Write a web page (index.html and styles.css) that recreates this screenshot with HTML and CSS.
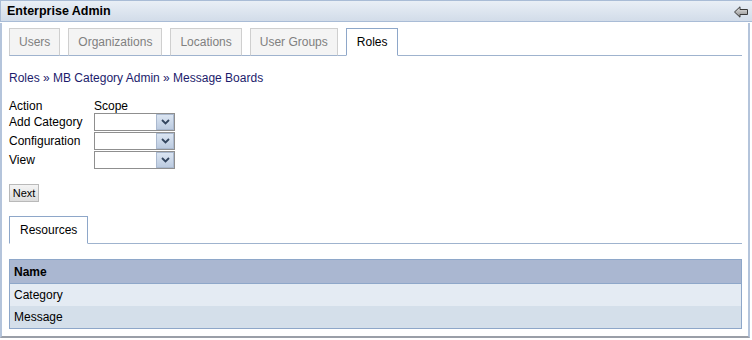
FILE: index.html
```
<!DOCTYPE html>
<html lang="en">
<head>
	<meta charset="UTF-8">
	<title>Enterprise Admin</title>
	<link rel="stylesheet" href="styles.css">
</head>
<body>
	<div class="portlet">
		<div class="portlet-title">
			<span class="title-text">Enterprise Admin</span>
			<a class="back-icon" href="#" title="Back">
				<svg width="14" height="12" viewBox="0 0 14 12">
					<defs>
						<linearGradient id="arrowFill" x1="0" y1="0" x2="0" y2="1">
							<stop offset="0" stop-color="#e8e8e8"/>
							<stop offset="1" stop-color="#8a8a8a"/>
						</linearGradient>
					</defs>
					<polygon points="0.5,6 6,0.8 6,3.5 13.5,3.5 13.5,8.5 6,8.5 6,11.2" fill="url(#arrowFill)" stroke="#3a3a3a" stroke-width="1"/>
				</svg>
			</a>
		</div>
		<div class="portlet-content">
			<ul class="tabs">
				<li class="tab"><a href="#">Users</a></li>
				<li class="tab"><a href="#">Organizations</a></li>
				<li class="tab"><a href="#">Locations</a></li>
				<li class="tab"><a href="#">User Groups</a></li>
				<li class="tab current"><a href="#">Roles</a></li>
			</ul>

			<div class="breadcrumbs">
				<a href="#">Roles</a> &raquo; <a href="#">MB Category Admin</a> &raquo; <a href="#">Message Boards</a>
			</div>

			<table class="perm-form">
				<tr>
					<td class="label">Action</td>
					<td>Scope</td>
				</tr>
				<tr>
					<td class="label">Add Category</td>
					<td><span class="combo"><select></select><span class="combo-btn"><svg width="9" height="6" viewBox="0 0 9 6"><polyline points="1,1 4.5,4.5 8,1" fill="none" stroke="#33455e" stroke-width="1.8"/></svg></span></span></td>
				</tr>
				<tr>
					<td class="label">Configuration</td>
					<td><span class="combo"><select></select><span class="combo-btn"><svg width="9" height="6" viewBox="0 0 9 6"><polyline points="1,1 4.5,4.5 8,1" fill="none" stroke="#33455e" stroke-width="1.8"/></svg></span></span></td>
				</tr>
				<tr>
					<td class="label">View</td>
					<td><span class="combo"><select></select><span class="combo-btn"><svg width="9" height="6" viewBox="0 0 9 6"><polyline points="1,1 4.5,4.5 8,1" fill="none" stroke="#33455e" stroke-width="1.8"/></svg></span></span></td>
				</tr>
			</table>

			<button class="next-btn" type="button">Next</button>

			<ul class="tabs tabs-resources">
				<li class="tab current"><a href="#">Resources</a></li>
			</ul>

			<table class="results">
				<tr class="results-header">
					<th>Name</th>
				</tr>
				<tr class="row-a">
					<td>Category</td>
				</tr>
				<tr class="row-b">
					<td>Message</td>
				</tr>
			</table>
		</div>
	</div>
</body>
</html>
```
FILE: styles.css
```
body {
	margin: 0;
	background-color: #fff;
	color: #000;
	font-family: "Liberation Sans", Arial, sans-serif;
	font-size: 12px;
}

.portlet {
	width: 752px;
	height: 340px;
	box-sizing: border-box;
}

.portlet-title {
	display: flex;
	align-items: center;
	justify-content: space-between;
	height: 22px;
	box-sizing: border-box;
	padding: 0 4px 0 6px;
	border-top: 1px solid #a9bcd6;
	border-left: 1px solid #a9bcd6;
	border-bottom: 1px solid #a9bcd6;
	background: linear-gradient(#e9eff6, #d2dce9);
}

.title-text {
	font-weight: bold;
	font-size: 12.5px;
	color: #000;
}

.back-icon {
	display: flex;
	margin-top: 1px;
}

.portlet-content {
	height: 315px;
	box-sizing: border-box;
	margin: 1px 2px 0 0;
	padding: 5px 6px 0 8px;
	border-left: 2px solid #b4c4db;
	border-right: 2px solid #b4c4db;
	border-bottom: 2px solid #9a9fa8;
	background-color: #fff;
}

/* tabs */

.tabs {
	display: flex;
	gap: 8px;
	list-style: none;
	margin: 0;
	padding: 0;
	margin-left: -1px;
	border-bottom: 1px solid #9fb3ce;
}

.tab {
	margin-bottom: -1px;
}

.tab a {
	display: block;
	height: 26px;
	line-height: 27px;
	padding: 0 9px;
	border: 1px solid #cfcfcf;
	border-bottom: 1px solid #9fb3ce;
	background-color: #f4f4f4;
	color: #808080;
	text-decoration: none;
}

.tab.current a {
	padding: 0 10px;
	border-color: #8ea7c9;
	border-bottom-color: #fff;
	background-color: #fff;
	color: #000;
}

/* breadcrumbs */

.breadcrumbs {
	margin: 15px 0 0 -1px;
	line-height: 14px;
	color: #1c1c6c;
}

.breadcrumbs a {
	color: #1c1c6c;
	text-decoration: none;
}

/* permissions form */

.perm-form {
	margin-top: 14px;
	margin-left: -1px;
	border-collapse: collapse;
}

.perm-form td {
	padding: 0;
	height: 14px;
	line-height: 14px;
	vertical-align: top;
}

.perm-form tr + tr td {
	height: 19px;
	line-height: 18px;
}

.perm-form .label {
	width: 85px;
}

.combo {
	display: flex;
	width: 81px;
	height: 18px;
	box-sizing: border-box;
	border: 1px solid #8f8f8f;
	background-color: #fff;
}

.combo select {
	flex: 1;
	min-width: 0;
	border: none;
	outline: none;
	padding: 0;
	appearance: none;
	-webkit-appearance: none;
	background: transparent;
}

.combo-btn {
	display: flex;
	align-items: center;
	justify-content: center;
	width: 16px;
	border: 1px solid #aab9cf;
	background: linear-gradient(#dbe5f2, #bccbe0);
}

/* next button */

.next-btn {
	display: block;
	margin: 14px 0 0 -1px;
	width: 30px;
	height: 18px;
	padding: 0;
	border: 1px solid #b9b9b9;
	background: linear-gradient(#f4f4f4, #dddddd);
	font-family: "Liberation Sans", Arial, sans-serif;
	font-size: 11px;
	color: #000;
}

/* resources */

.tabs-resources {
	margin-top: 14px;
}

.results {
	width: calc(100% + 1px);
	margin: 15px 0 0 -1px;
	border-collapse: collapse;
	border: 1px solid #8ea7c9;
}

.results th,
.results td {
	height: 22px;
	padding: 0 4px;
	text-align: left;
}

.results th {
	height: 23px;
	background-color: #aab7d1;
	border-bottom: 1px solid #8ea7c9;
	font-weight: bold;
}

.row-a td {
	background-color: #e4ebf3;
}

.row-b td {
	background-color: #d4dfea;
}
```
